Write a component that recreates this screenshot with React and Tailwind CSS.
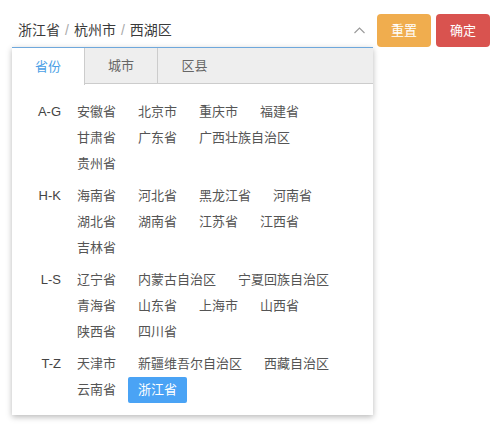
import React, { useState } from "react";

const groups = [
  { label: "A-G", items: ["安徽省", "北京市", "重庆市", "福建省", "甘肃省", "广东省", "广西壮族自治区", "贵州省"] },
  { label: "H-K", items: ["海南省", "河北省", "黑龙江省", "河南省", "湖北省", "湖南省", "江苏省", "江西省", "吉林省"] },
  { label: "L-S", items: ["辽宁省", "内蒙古自治区", "宁夏回族自治区", "青海省", "山东省", "上海市", "山西省", "陕西省", "四川省"] },
  { label: "T-Z", items: ["天津市", "新疆维吾尔自治区", "西藏自治区", "云南省", "浙江省"] },
];

const tabs = ["省份", "城市", "区县"];

export default function App() {
  const [active, setActive] = useState(0);
  const [selected, setSelected] = useState("浙江省");

  return (
    <div
      className="w-[500px] h-[434px] bg-white text-[#333]"
      style={{ fontFamily: '"Liberation Sans", "Noto Sans CJK SC", sans-serif' }}
    >
      <div className="flex items-start pt-[14px] pl-[12px]">
        <div className="relative w-[361px]">
          <div className="h-[33px] flex items-center justify-between pl-[6px] pr-[8px] text-[14px] text-[#3a3a3a]">
            <span>
              浙江省<span className="mx-[5px] text-[#aaa]">/</span>杭州市
              <span className="mx-[5px] text-[#aaa]">/</span>西湖区
            </span>
            <svg width="11" height="7" viewBox="0 0 11 7" fill="none">
              <polyline points="0.5,6 5.5,1 10.5,6" stroke="#999" strokeWidth="1.1" />
            </svg>
          </div>

          {/* dropdown panel */}
          <div className="absolute left-0 top-full w-full bg-white border-t border-[#6fa8dc] shadow-[0_2px_6px_rgba(0,0,0,0.28)]">
            <div className="flex h-[36px] bg-[#eeeeee] border-b border-[#cccccc]">
              {tabs.map((t, i) => (
                <button
                  key={t}
                  onClick={() => setActive(i)}
                  className={
                    "w-[73px] text-[13px] " +
                    (i < 2 ? "border-r border-[#cccccc] " : "") +
                    (active === i ? "bg-white text-[#4a9fe6] h-[37px]" : "text-[#666]")
                  }
                >
                  {t}
                </button>
              ))}
            </div>

            <div className="pt-[15px] pb-[12px] flex flex-col gap-[6px]">
              {groups.map((g) => (
                <div key={g.label} className="flex">
                  <div className="w-[49px] shrink-0 text-right text-[13px] leading-[26px] text-[#444]">{g.label}</div>
                  <div className="ml-[6px] pr-[12px] flex-1 flex flex-wrap">
                    {g.items.map((it) => (
                      <span
                        key={it}
                        onClick={() => setSelected(it)}
                        className={
                          "h-[26px] leading-[26px] px-[10px] mr-[2px] text-[13px] rounded-[2px] cursor-pointer " +
                          (selected === it ? "bg-[#4aa3f5] text-white" : "text-[#555]")
                        }
                      >
                        {it}
                      </span>
                    ))}
                  </div>
                </div>
              ))}
            </div>
          </div>
        </div>

        <button className="ml-[4px] w-[54px] h-[33px] rounded-[4px] bg-[#f0ad4e] text-white text-[13px]">重置</button>
        <button className="ml-[5px] w-[54px] h-[33px] rounded-[4px] bg-[#d9534f] text-white text-[13px]">确定</button>
      </div>
    </div>
  );
}
